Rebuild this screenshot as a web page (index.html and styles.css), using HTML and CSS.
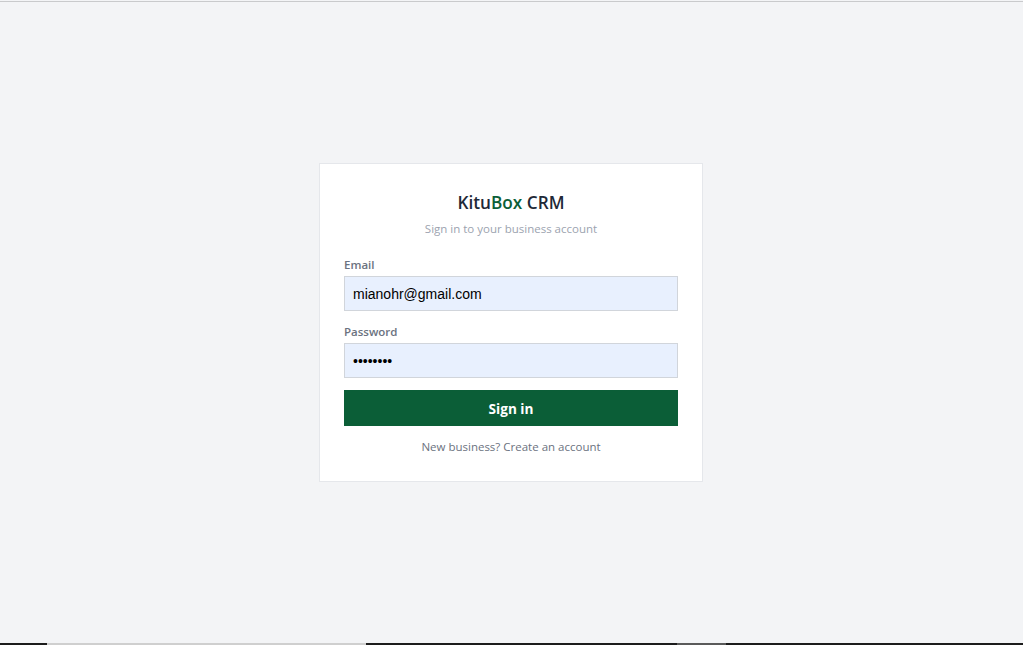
FILE: index.html
```html
<!DOCTYPE html>
<html lang="en">
<head>
<meta charset="utf-8">
<title>KituBox CRM – Sign in</title>
<link rel="stylesheet" href="styles.css">
</head>
<body>
<div class="page">
  <div class="topline"></div>
  <main class="main">
    <form class="card">
      <h1 class="title">Kitu<span class="accent">Box</span> CRM</h1>
      <p class="subtitle">Sign in to your business account</p>
      <label class="label" for="email">Email</label>
      <input class="input" id="email" type="text" value="mianohr@gmail.com">
      <label class="label label-second" for="password">Password</label>
      <input class="input" id="password" type="password" value="password">
      <button class="btn" type="button">Sign in</button>
      <p class="footer-link">New business? Create an account</p>
    </form>
  </main>
  <div class="taskbar">
    <span class="seg dark w47"></span>
    <span class="seg light w319"></span>
    <span class="seg dark w311"></span>
    <span class="seg mid w49"></span>
    <span class="seg dark grow"></span>
  </div>
</div>
</body>
</html>
```

FILE: styles.css
```css
* { box-sizing: border-box; }
html, body { margin: 0; padding: 0; height: 100%; }
body {
  background: #f3f4f6;
  font-family: "Open Sans", "Noto Sans", "Liberation Sans", sans-serif;
  color: #1f2937;
}
.page {
  display: flex;
  flex-direction: column;
  height: 645px;
}
.topline {
  height: 2px;
  border-bottom: 1px solid #c9cacc;
  background: #f3f4f6;
  flex: none;
}
.main {
  flex: 1;
  display: flex;
  align-items: center;
  justify-content: center;
  padding-right: 1px;
}
.card {
  width: 384px;
  background: #ffffff;
  border: 1px solid #e5e7eb;
  padding: 26px 24px 26px;
  display: flex;
  flex-direction: column;
}
.title {
  margin: 0;
  text-align: center;
  font-size: 17.2px;
  line-height: 26px;
  font-weight: 600;
  color: #1f2937;
}
.accent { color: #0b5e37; }
.subtitle {
  margin: 5px 0 0;
  text-align: center;
  font-size: 11.5px;
  line-height: 16px;
  color: #9ca3af;
}
.label {
  margin-top: 20px;
  font-size: 11.5px;
  line-height: 16px;
  font-weight: 600;
  color: #6b7280;
}
.label-second { margin-top: 13px; }
.input {
  margin-top: 3px;
  height: 35px;
  width: 100%;
  border: 1px solid #d1d5db;
  background: #e8f0fe;
  padding: 0 8px;
  font-family: "Liberation Sans", Arial, sans-serif;
  font-size: 14px;
  color: #000000;
  outline: none;
  border-radius: 0;
}
.btn {
  margin-top: 12px;
  height: 36px;
  width: 100%;
  border: none;
  background: #0b5e37;
  color: #ffffff;
  font-family: "Open Sans", "Noto Sans", sans-serif;
  font-size: 13.6px;
  font-weight: 700;
  cursor: pointer;
}
.footer-link {
  margin: 13px 0 0;
  text-align: center;
  font-size: 11.5px;
  line-height: 16px;
  color: #6b7280;
}
.taskbar {
  height: 2px;
  display: flex;
  flex: none;
}
.seg { display: block; height: 2px; }
.dark { background: #1c1c1c; }
.light { background: #cfcfcf; }
.mid { background: #5a5a5a; }
.w47 { width: 47px; }
.w319 { width: 319px; }
.w311 { width: 311px; }
.w49 { width: 49px; }
.grow { flex: 1; }
```
